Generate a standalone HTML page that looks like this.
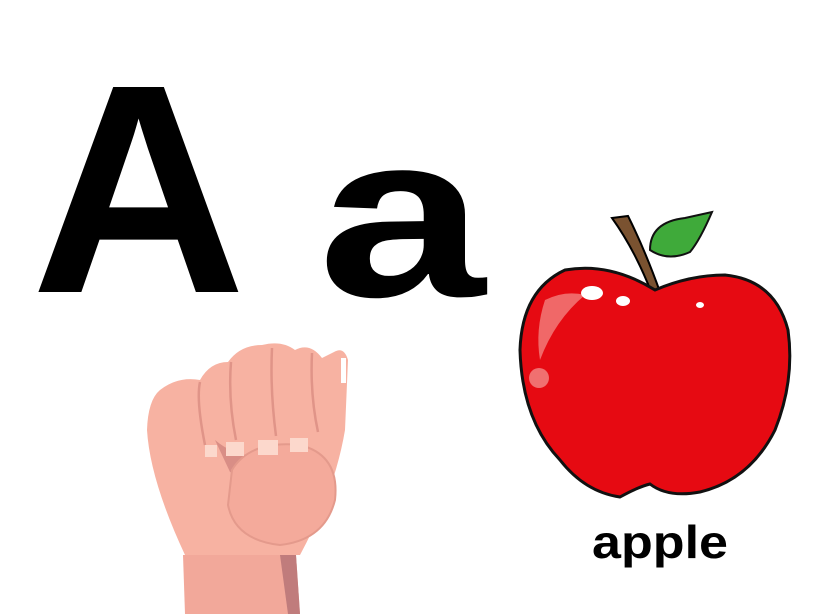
<!DOCTYPE html>
<html><head><style>
html,body{margin:0;padding:0;background:#fff;}
body{width:813px;height:614px;overflow:hidden;position:relative;}
</style></head><body>
<svg width="813" height="614" viewBox="0 0 813 614" xmlns="http://www.w3.org/2000/svg" style="position:absolute;left:0;top:0">
<text x="31" y="292" font-family="Liberation Sans, sans-serif" font-weight="bold" font-size="298" fill="#000">A</text>
<text x="0" y="0" transform="translate(318 296) scale(1.03 0.8)" font-family="Liberation Sans, sans-serif" font-weight="bold" font-size="292" fill="#000">a</text>

<!-- hand -->
<g>
<path d="M183 555 L185 614 L300 614 L296 555 Z" fill="#f2a89a"/>
<path d="M280 555 L296 555 L300 614 L288 614 Z" fill="#c07c7c"/>
<path d="M160 390 Q148 400 147 430 Q150 480 185 555 L300 555 Q335 490 345 430 L348 360 Q344 346 334 352 L322 358 Q310 342 295 350 Q282 340 262 345 Q240 345 228 362 Q210 362 200 380 Q178 376 160 390 Z" fill="#f7b2a2"/>
<path d="M200 382 Q196 400 205 445 M231 362 Q228 400 236 440 M272 348 Q270 390 276 436 M312 353 Q310 395 318 432" stroke="#e09488" stroke-width="2.5" fill="none"/>
<path d="M215 440 Q250 470 305 445 Q270 485 230 472 Z" fill="#d98e86"/>
<path d="M232 470 Q250 440 300 445 Q340 455 335 500 Q325 540 280 545 Q235 540 228 505 Z" fill="#f4aa9b" stroke="#e49a8c" stroke-width="2"/>
<rect x="226" y="442" width="18" height="14" fill="#fcd8cc"/>
<rect x="258" y="440" width="20" height="15" fill="#fcd8cc"/>
<rect x="290" y="438" width="18" height="14" fill="#fcd8cc"/>
<rect x="205" y="445" width="12" height="12" fill="#fcd8cc"/>
<rect x="341" y="358" width="5" height="25" fill="#fff"/>
</g>

<!-- apple -->
<path d="M612 218 L628 216 Q645 250 660 292 L652 294 Q635 250 612 218 Z" fill="#7a5230" stroke="#000" stroke-width="2"/>
<path d="M650 250 Q650 222 685 218 L712 212 Q700 240 690 252 Q668 262 650 250 Z" fill="#3faa3a" stroke="#111" stroke-width="2"/>
<path d="M655 290 Q610 262 565 270 Q522 290 520 350 Q522 420 560 460 Q585 492 620 497 Q638 487 650 484 Q668 498 700 492 Q750 480 775 430 Q795 380 788 330 Q775 280 725 275 Q690 275 655 290 Z" fill="#e60a12" stroke="#111" stroke-width="3"/>
<path d="M545 300 Q535 330 540 360 Q555 320 585 295 Q565 290 545 300 Z" fill="#f06868"/>
<ellipse cx="592" cy="293" rx="11" ry="7" fill="#fff"/>
<ellipse cx="623" cy="301" rx="7" ry="5" fill="#fff"/>
<ellipse cx="700" cy="305" rx="4" ry="3" fill="#fff"/>
<circle cx="539" cy="378" r="10" fill="#f07070"/>

<text x="592" y="558" textLength="136" lengthAdjust="spacingAndGlyphs" font-family="Liberation Sans, sans-serif" font-weight="bold" font-size="46" fill="#000">apple</text>
</svg>
</body></html>
